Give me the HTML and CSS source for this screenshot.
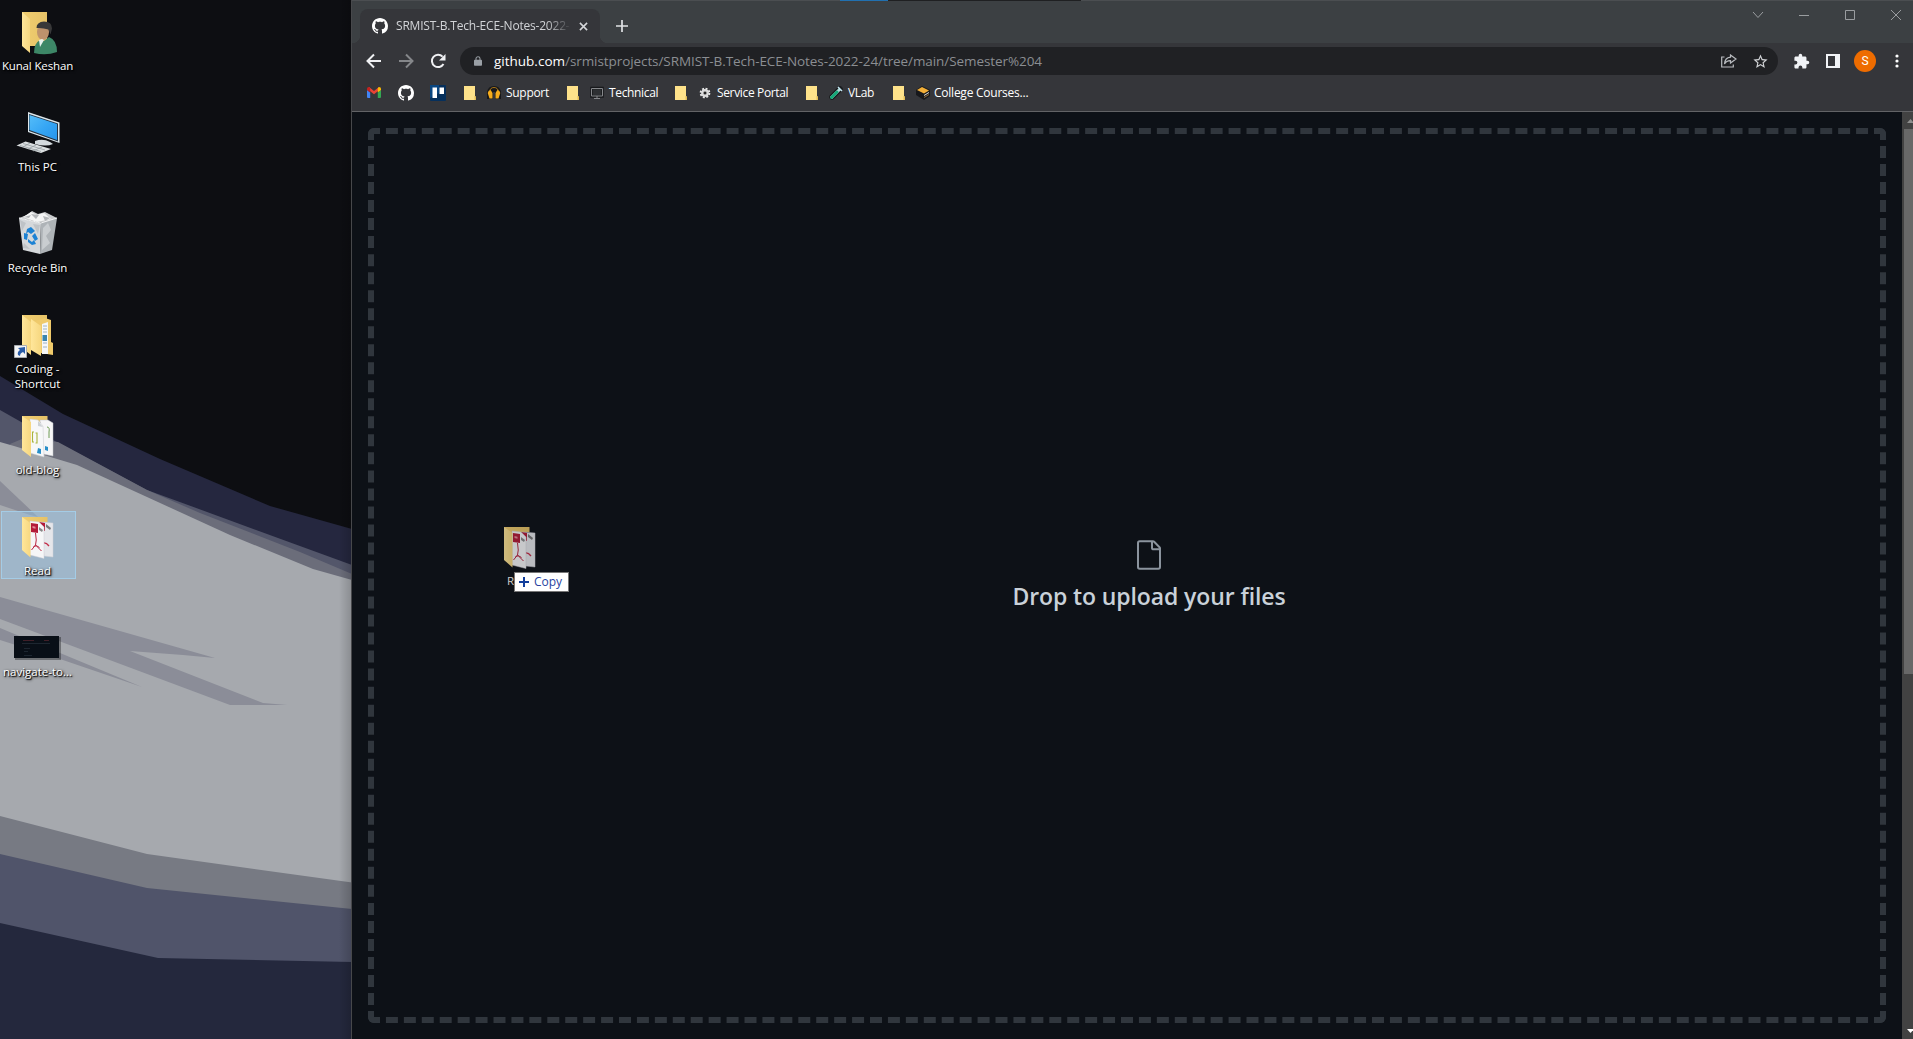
FILE: index.html
```html
<!DOCTYPE html>
<html lang="en">
<head>
<meta charset="utf-8">
<title>Desktop</title>
<link rel="stylesheet" href="styles.css">
</head>
<body>
<svg class="defs" aria-hidden="true">
  <defs>
    <linearGradient id="gold" x1="0" x2="1"><stop offset="0" stop-color="#ffe69a"/><stop offset="1" stop-color="#f6d780"/></linearGradient>
    <linearGradient id="back" x1="0" x2="1"><stop offset="0" stop-color="#f1ce70"/><stop offset="1" stop-color="#e6c267"/></linearGradient>
    <linearGradient id="screen" x1="0" x2="1" y2="1"><stop offset="0" stop-color="#55bdf9"/><stop offset=".55" stop-color="#35a5f4"/><stop offset="1" stop-color="#2795ec"/></linearGradient>
    <linearGradient id="shade" x1="0" x2="1"><stop offset="0" stop-color="#000" stop-opacity="0"/><stop offset="1" stop-color="#000" stop-opacity=".16"/></linearGradient>
  </defs>
  <symbol id="github" viewBox="0 0 16 16"><path d="M8 0C3.58 0 0 3.58 0 8c0 3.54 2.29 6.53 5.47 7.59.4.07.55-.17.55-.38 0-.19-.01-.82-.01-1.49-2.01.37-2.53-.49-2.69-.94-.09-.23-.48-.94-.82-1.13-.28-.15-.68-.52-.01-.53.63-.01 1.08.58 1.23.82.72 1.21 1.87.87 2.33.66.07-.52.28-.87.51-1.07-1.78-.2-3.64-.89-3.64-3.95 0-.87.31-1.59.82-2.15-.08-.2-.36-1.02.08-2.12 0 0 .67-.21 2.2.82.64-.18 1.32-.27 2-.27s1.36.09 2 .27c1.53-1.04 2.2-.82 2.2-.82.44 1.1.16 1.92.08 2.12.51.56.82 1.27.82 2.15 0 3.07-1.87 3.75-3.65 3.95.29.25.54.73.54 1.48 0 1.07-.01 1.93-.01 2.2 0 .21.15.46.55.38A8.01 8.01 0 0 0 16 8c0-4.42-3.58-8-8-8z"/></symbol>
  <symbol id="note" viewBox="0 0 12 14"><path fill="#fee28a" d="M0 0h11v10l1 1v3H0z"/><path fill="#e3bd55" d="M10.500 10h.7l.8 1v3h-1.500z"/></symbol>
  <symbol id="pdf-folder" viewBox="0 0 75 52">
    <path fill="url(#back)" d="M22 6h25.500v5H30v29l-8-1z"/>
    <path fill="#e5e6ea" stroke="#cfcfd4" stroke-width=".5" d="M40 11l13 1v34l-9-1z"/><path fill="#b31b38" d="M39 11l6 1v8l-5-2z"/><path fill="#777" d="M46 13l5 4-1 2-4-3z"/><path d="M43 32q3-1 6 3" fill="none" stroke="#c5304a" stroke-width="1.300"/>
    <path fill="#f6f6f7" stroke="#cfcfd4" stroke-width=".5" d="M30 10l9 1 5 5v31.500L30 44z"/><path fill="#b31b38" d="M31 12l7 1v9l-7-1z"/><path fill="#888" d="M39 16l4 3-1 2-3-2z"/><path fill="#e78998" d="M32.500 15l3 .7v2l-3-.7z"/>
    <path d="M35.500 22q1.500 8 0 12l-4 5m4-5 6 6m-8-4.500q3-2 6 1" fill="none" stroke="#bb2742" stroke-width="1"/>
    <path fill="url(#gold)" d="M22 6l8.500 6v34.500L22 39z"/>
  </symbol>
</svg>

<main class="desktop">
  <svg class="wallpaper" viewBox="0 0 352 1039" preserveAspectRatio="none" aria-hidden="true">
    <path fill="#0d0e12" d="M0 0h352v1039H0z"/>
    <path fill="#25273f" d="M0 376 63 414 160 459 270 506 352 529V700H0z"/>
    <path fill="#53566a" d="M0 410 53 440 147 490 352 565V700H0z"/>
    <path fill="#6b6d7a" d="M10 444 22 439 58 442 147 490 200 513 300 552 352 574V700H100z"/>
    <path fill="#a6a9ae" d="M0 442 14 446 77 465 147 497 230 535 313 569 352 580V900H0z"/>
    <path fill="#8b8d98" d="M0 481 38 517 30 515 0 505zM0 597 215 658 183 655 130 651 263 703 287 705H230L0 619zM0 628 60 653 142 687 60 659 0 640z"/>
    <path fill="#777a83" d="M0 816 147 854 352 882.500V1000H0z"/>
    <path fill="#50546a" d="M0 854 147 888 352 909V1039H0z"/>
    <path fill="#24283d" d="M0 923 158 958 352 962V1039H0z"/>
    <path fill="url(#shade)" d="M339 0h12v1039h-12z"/>
  </svg>

  <section class="icons">
    <div class="shortcut">
      <svg viewBox="0 0 75 52"><path fill="url(#back)" d="M22 6h25v34H22z"/><path fill="url(#gold)" d="M22 6l8 7v34l-8-7z"/><ellipse cx="43" cy="26" rx="6" ry="8" fill="#bd926c"/><path fill="#383839" d="M36.500 22q0-6 7.500-6.500 8 0 8 7l-1.500 6-2-5q-6-2-12-1.500z"/><path fill="#3d8767" d="M34 47q0-10 6-13l4 1 5-4q8 3 8 15-11 4-23 1z"/><path fill="#e9f2ef" d="m39 34 3-1 2 1-4 7z"/></svg>
      <span class="s-kunal">Kunal Keshan</span>
    </div>
    <div class="shortcut">
      <svg viewBox="0 0 75 52"><path fill="#d4dade" d="M35 34q8-3 15 1l3 2q-7 3-18 0z"/><path fill="#dde7ec" d="m28 5 31.500 10.500v20.500L28 25z"/><path fill="#26323f" d="m29 7 29 9.500v18L29 24z"/><path fill="url(#screen)" d="m29.500 8 27.500 9v16L29.500 23z"/><path fill="#dce0e2" d="m16.500 38.500 9-4L51 42l-10 4z"/><path fill="none" stroke="#8e969b" stroke-width=".7" d="m20 38.500 21 6m-18-8 22 6.500M23 40l7-4m-2 6 8-4m-3 6 9-4"/></svg>
      <span>This PC</span>
    </div>
    <div class="shortcut">
      <svg viewBox="0 0 75 52"><path fill="#c9cbcd" d="m19 10 8-3 5-4 6 3 7-2 12 6-14 5z"/><path fill="#f4f5f5" d="m23 9 8-5 6 3 7-2 7 6-14 3z"/><path fill="#b3b6b9" d="m31 6 5 5 3-4zM24 9l5 1 2-3zM43 8l2 5 5-3z"/><path fill="#d5d8db" d="m19 10 22 5-1 31-17-4z"/><path fill="#aeb3b7" d="m41 15 16-5-5 32-12 4z"/><path fill="#c9cdd0" d="m43 20 5-5 3 7-5 6 4 7-8 7z"/><path fill="#bfc3c7" d="m20 12 6 3-4 8zM33 16l7 1-2 9zM24 35l6 6-7-1z"/><path fill="none" stroke="#f2f3f4" d="m19 10 22 5 16-5"/><path fill="#1d82d4" d="m27 21 4-2 4 4-4 3-3-2-2 2zm8 4 3 6-3 2-3-5zm-11 0 4 1-1 6-3-1zm4 6 4 3 2-2 2 4-4 1-4-3z"/></svg>
      <span class="s-bin">Recycle Bin</span>
    </div>
    <div class="shortcut">
      <svg viewBox="0 0 75 52"><path fill="url(#back)" d="M22 6h25v34H22z"/><path fill="#efca6b" d="m35 12 10-3 6 2v22l2 1v12l-12-2z"/><path fill="#f5f7f8" d="m42 15 6-2v32h-6z"/><path fill="none" stroke="#9eb2c2" stroke-width="1" d="M43 17h4m-4 3h4m-4 3h4m-4 11h4m-4 4h4"/><path fill="#3984ad" d="M42.500 26h4.500v6h-4.500z"/><path fill="url(#gold)" d="m22 6 9 7v33l-9-7z"/><path fill="url(#gold)" d="m31 10 10 7v30l-10-6z"/><path fill="#f3f4f5" stroke="#a9adb2" d="M14.500 36.500h12v12h-12z"/><path fill="#285ba8" d="m18 39 7-1v7l-2-2q-3 1-3 4l-2-1q-1-3 2-5z"/></svg>
      <span>Coding -<br>Shortcut</span>
    </div>
    <div class="shortcut">
      <svg viewBox="0 0 75 52"><path fill="url(#back)" d="M22 6h25.500v6H22z"/><path fill="#f6f6f7" stroke="#bfc3c7" stroke-width=".5" d="M40 10h8l5 3v33l-10-2z"/><path fill="none" stroke="#6e9c55" d="M47 17q3 0 2 5v6"/><path fill="#298fc8" d="m45 36 3 1v4l-3-1z"/><path fill="#f7f8f9" stroke="#c8cbce" stroke-width=".5" d="m30 9 8 1 5 6 1 31-14-4z"/><path fill="#ccd1d4" d="m38 11 5 6-5-1z"/><path fill="none" stroke="#aab43c" stroke-width="1.100" d="M34 22h-1.500v10H34m1.500-9H37v10h-1.500"/><path fill="#298fc8" d="m38 38 3 1v5l-4-1z"/><path fill="url(#gold)" d="m22 6 9 6v35l-9-7z"/></svg>
      <span>old-blog</span>
    </div>
    <div class="shortcut selected">
      <svg viewBox="0 0 75 52"><use href="#pdf-folder"/></svg>
      <span>Read</span>
    </div>
    <div class="shortcut">
      <svg viewBox="0 0 75 52"><path fill="#0005" d="M15 25h46v23H15z"/><path fill="#090f17" d="M14 24h45v22H14z"/><path fill="none" stroke="#5a2730" stroke-opacity=".7" d="M23 28.500h11m10 0h5"/><path fill="none" stroke="#26313c" stroke-opacity=".7" d="M22 31.500h28M24 36.500h6m-6 3h4m-4 4h8"/></svg>
      <span>navigate-to...</span>
    </div>
  </section>

  <section class="window">
    <header class="tabstrip">
      <i class="edge-blue"></i><i class="edge-dark"></i>
      <div class="tab">
        <svg class="i16 white" viewBox="0 0 16 16"><use href="#github"/></svg>
        <span class="tab-title">SRMIST-B.Tech-ECE-Notes-2022-</span>
        <svg class="close" viewBox="0 0 10 10"><path d="m1 1 8 8m0-8-8 8"/></svg>
      </div>
      <svg class="plus" viewBox="0 0 12 12"><path d="M6 0v12M0 6h12"/></svg>
      <svg class="controls" viewBox="0 0 150 12"><path d="m1 3 5 5.500L11 3M47 6.500h10M93.500 1.500h9v9h-9zM139 1l10 10m0-10-10 10"/></svg>
    </header>
    <div class="toolbar">
      <svg class="nav" viewBox="0 0 80 16"><path stroke="#f0f1f3" d="M15 8H2m6-6.500L1.500 8 8 14.500"/><path stroke="#85878a" d="M33 8h13m-6-6.500L46.500 8 40 14.500"/><path stroke="#f0f1f3" d="M77.500 11a6.200 6.200 0 1 1-.9-7.400"/><path fill="#f0f1f3" d="M79.500 1v6.500H73z"/></svg>
      <div class="omnibox">
        <svg class="lock" viewBox="0 0 10 12"><path fill="#9aa0a6" d="M1 4.500h8q1 0 1 1V11q0 1-1 1H1q-1 0-1-1V5.500q0-1 1-1z"/><path fill="none" stroke="#9aa0a6" stroke-width="1.300" d="M2.500 5V3a2.500 2.300 0 0 1 5 0v2"/></svg>
        <div class="url"><b>github.com</b><span>/srmistprojects/SRMIST-B.Tech-ECE-Notes-2022-24/tree/main/Semester%204</span></div>
        <svg class="share" viewBox="0 0 16 14"><path d="M3.500 3H.7v10h11.600v-2.500"/><path d="M9.500 1 15 5 9.500 9V6.700Q5.500 6.500 3.500 10q.5-6.300 6-6.800z"/></svg>
        <svg class="star" viewBox="0 0 24 24"><path d="m22 9.240-7.190-.62L12 2 9.190 8.630 2 9.240l5.460 4.730L5.820 21 12 17.270 18.180 21l-1.630-7.030zM12 15.400l-3.760 2.270 1-4.280-3.320-2.880 4.380-.38L12 6.100l1.710 4.040 4.380.38-3.320 2.880 1 4.280z"/></svg>
      </div>
      <svg class="puzzle" viewBox="0 0 24 24"><path d="M20.500 11H19V7c0-1.100-.9-2-2-2h-4V3.500a2.500 2.500 0 0 0-5 0V5H4c-1.100 0-2 .9-2 2v3.800h1.500a2.700 2.700 0 0 1 0 5.400H2V20c0 1.100.9 2 2 2h3.800v-1.500a2.700 2.700 0 0 1 5.400 0V22H17c1.100 0 2-.9 2-2v-4h1.500a2.500 2.500 0 0 0 0-5z"/></svg>
      <svg class="panel" viewBox="0 0 14 14"><path d="M0 0h14v14H0zm2 2v10h7V2z" fill-rule="evenodd"/></svg>
      <span class="avatar">S</span>
      <svg class="dots" viewBox="0 0 4 14"><circle cx="2" cy="2" r="1.600"/><circle cx="2" cy="7" r="1.600"/><circle cx="2" cy="12" r="1.600"/></svg>
    </div>
    <nav class="bookmarks">
      <svg class="gmail" viewBox="0 0 14 11"><path fill="#4285f4" d="M0 3l3.200 2.500V11H1q-1 0-1-1z"/><path fill="#34a853" d="M14 3l-3.200 2.500V11H13q1 0 1-1z"/><path fill="#ea4335" d="M2 0l5 4 5-4 1 2.500-6 4.800-6-4.800z"/><path fill="#c5221f" d="M0 1.500Q0 0 2 0l1.200 1v4.500L0 3z"/><path fill="#fbbc04" d="M14 1.500Q14 0 12 0l-1.200 1v4.500L14 3z"/></svg>
      <svg class="i16 white" viewBox="0 0 16 16"><use href="#github"/></svg>
      <svg class="i16 trello" viewBox="0 0 16 16"><rect width="16" height="16" rx="1" fill="#06305c"/><path fill="#0a4680" d="M0 0h9v8L0 13z"/><path fill="#fff" d="M2.500 2.500H7V13H2.500zM9.500 2.500H14V9H9.500z"/></svg>
      <a class="bm"><svg class="note"><use href="#note"/></svg><svg class="bi" viewBox="0 0 14 14"><path fill="#17181b" d="M0 13V6q1-6 7-6t7 6v7H8V6H6v7z"/><path fill="none" stroke="#a87518" stroke-width="1" d="M2.500 6Q3 1.500 7 1.500T11.500 6"/><path fill="#f6ac1c" d="M.7 7q.3-2.500 3-3L5.500 7v5.500h-3zM13.300 7q-.3-2.500-3-3L8.500 7v5.500h3z"/></svg><span class="b-support">Support</span></a>
      <a class="bm"><svg class="note"><use href="#note"/></svg><svg class="bi" viewBox="0 0 14 14"><path fill="#2e3033" stroke="#17181b" stroke-width="2.500" d="M1.500 2h11v8.500h-11z"/><path fill="none" stroke="#85878a" d="M1.500 2.500h11v7.500h-11zM4 12.500h6M7 10v2"/></svg><span class="b-tech">Technical</span></a>
      <a class="bm"><svg class="note"><use href="#note"/></svg><svg class="bi gear" viewBox="0 0 14 14"><circle cx="7" cy="7" r="5" fill="none" stroke="#e8e8e8" stroke-width="2.500" stroke-dasharray="2.200 1.730"/><circle cx="7" cy="7" r="3.300" fill="#666" stroke="#dcdcdc" stroke-width="2.500"/><circle cx="7" cy="7" r="1.200" fill="#111"/></svg><span class="b-service">Service Portal</span></a>
      <a class="bm"><svg class="note"><use href="#note"/></svg><svg class="bi" viewBox="0 0 14 14"><path stroke="#191b1d" stroke-width="5.500" stroke-linecap="round" d="m3 11 8-8"/><path stroke="#aed8d7" stroke-width="3" d="m2 12 9-9"/><path stroke="#16a979" stroke-width="3" stroke-linecap="round" d="m2.500 11.500 5.500-5.500"/><path stroke="#c4e8f3" stroke-width="1.500" d="m9 1 4 4"/></svg><span class="b-vlab">VLab</span></a>
      <a class="bm"><svg class="note"><use href="#note"/></svg><svg class="bi" viewBox="0 0 14 14"><path fill="#17181b" d="m0 4 6-4 8 4v6l-6 4-8-5z"/><path fill="#f1ae38" d="m1 4 5-3 7 3.500-5 3z"/><path fill="#e1e1df" d="m8 9 5-3v1L8 10z"/><path fill="#8e6b3d" d="m8 11 5-3v1l-5 3z"/></svg><span class="b-college">College Courses...</span></a>
    </nav>
    <div class="page">
      <div class="dropzone">
        <svg class="file" viewBox="0 0 24 24"><path d="M3 3a2 2 0 0 1 2-2h9.982a2 2 0 0 1 1.414.586l4.018 4.018A2 2 0 0 1 21 7.018V21a2 2 0 0 1-2 2H5a2 2 0 0 1-2-2V3zm2-.5a.5.5 0 0 0-.5.5v18a.5.5 0 0 0 .5.5h14a.5.5 0 0 0 .5-.5V8.500h-4a2 2 0 0 1-2-2v-4H5zm10 0v4a.5.5 0 0 0 .5.5h4a.5.5 0 0 0-.146-.336l-4.018-4.018A.5.5 0 0 0 15 2.500z"/></svg>
        <h1>Drop to upload your files</h1>
      </div>
      <div class="scrollbar">
        <svg viewBox="0 0 11 17"><path fill="#8e8e8e" d="m5 11 3.500-4 3.500 4z"/></svg>
        <i class="thumb"></i>
        <svg viewBox="0 0 11 17"><path fill="#fff" d="M5 7h7l-3.500 4z"/></svg>
      </div>
    </div>
  </section>

  <div class="drag">
    <svg viewBox="0 0 75 52"><use href="#pdf-folder"/></svg>
    <span class="drag-label">Read</span>
    <div class="copy"><svg viewBox="0 0 10 10"><path d="M5 0v10M0 5h10"/></svg><span>Copy</span></div>
  </div>
</main>
</body>
</html>
```
FILE: styles.css
```css
* { box-sizing: border-box; }
body { margin: 0; overflow: hidden; font-family: "Open Sans", "Noto Sans", sans-serif; font-size: 12px; background: #0d0e12; }
svg { display: block; flex: none; }
.defs { position: absolute; width: 0; height: 0; }
.desktop { position: relative; display: flex; width: 1913px; height: 1039px; }
.wallpaper { position: absolute; left: 0; top: 0; width: 352px; height: 1039px; }

.icons { position: relative; width: 351px; padding: 6px 0 0 1px; flex: none; }
.shortcut { width: 75px; height: 68px; margin-bottom: 33px; border: 1px solid transparent; }
.shortcut svg { width: 75px; height: 52px; margin: -1px 0 0 -2px; }
.shortcut span { display: block; margin-left: -2px; width: 75px; text-align: center; white-space: nowrap; line-height: 15px; font-size: 11.500px; color: #fff; text-shadow: 1px 1px 1px #000, 1px 1px 3px #000; }
.selected { background: #98c4e480; border-color: #a4cce6; }
.shortcut .s-kunal { letter-spacing: -.14px; }
.shortcut .s-bin { letter-spacing: -.05px; }

.window { flex: 1; min-width: 0; display: flex; flex-direction: column; border-left: 1px solid #47484b; position: relative; background: #35363a; }
.tabstrip { position: relative; height: 43px; flex: none; display: flex; background: #3c4043; border-top: 1px solid #4b4e51; padding: 8px 11px 0 8px; }
.edge-blue, .edge-dark { position: absolute; top: -1px; height: 1px; }
.edge-blue { left: 488px; width: 48px; background: #2170b0; }
.edge-dark { left: 536px; width: 193px; background: #1f2022; }
.tab { position: relative; width: 240px; height: 34px; display: flex; align-items: center; background: #35363a; border-radius: 8px 8px 0 0; padding: 0 12px; }
.tab::before, .tab::after { content: ""; position: absolute; bottom: 0; width: 8px; height: 8px; }
.tab::before { left: -8px; background: radial-gradient(circle at 0 0, transparent 8px, #35363a 8.500px); }
.tab::after { right: -8px; background: radial-gradient(circle at 100% 0, transparent 8px, #35363a 8.500px); }
.i16 { width: 16px; height: 16px; }
.white { fill: #fff; }
.tab-title { width: 176px; margin-left: 8px; overflow: hidden; white-space: nowrap; font-size: 12px; letter-spacing: -.2px; line-height: 16px; margin-bottom: 1px; color: #d2d4d7; -webkit-mask-image: linear-gradient(90deg, #000 86%, transparent); mask-image: linear-gradient(90deg, #000 86%, transparent); }
.close { width: 9px; height: 9px; margin-left: 8px; fill: none; stroke: #d5d7da; stroke-width: 1.700; }
.plus { width: 12px; height: 12px; margin: 11px 0 0 16px; fill: none; stroke: #e0e2e5; stroke-width: 1.700; }
.controls { width: 150px; height: 12px; margin: 0 0 0 auto; fill: none; stroke: #9a9da0; stroke-width: 1; }

.toolbar { height: 36px; flex: none; display: flex; align-items: center; padding: 0 14px; }
.nav { width: 80px; height: 16px; fill: none; stroke-width: 2; }
.omnibox { width: 1319px; height: 28px; margin-left: 14px; border-radius: 14px; background: #202124; display: flex; align-items: center; padding: 0 9px 0 14px; }
.lock { width: 8px; height: 12px; }
.url { margin-left: 12px; font-size: 13.500px; line-height: 20px; white-space: nowrap; flex: 1; color: #8b8e92; }
.url b { color: #fff; font-weight: 400; }
.url span { letter-spacing: -.08px; }
.share { width: 16px; height: 14px; fill: none; stroke: #b9bcc0; stroke-width: 1.200; }
.star { width: 17px; height: 17px; margin-left: 15px; fill: #d1d3d6; }
.puzzle { width: 17px; height: 17px; margin-left: 14.500px; fill: #f1f3f6; }
.panel { width: 14px; height: 14px; margin-left: 16.500px; fill: #f1f3f6; }
.avatar { width: 22px; height: 22px; margin-left: 14px; border-radius: 50%; background: #ee6c00; color: #fff; display: flex; align-items: center; justify-content: center; font: 12px Roboto, sans-serif; }
.dots { width: 4px; height: 14px; margin-left: 19px; fill: #fff; }

.bookmarks { height: 33px; flex: none; display: flex; align-items: center; padding: 0 0 5px 15px; border-bottom: 1px solid #626366; }
.gmail { width: 14px; height: 11px; margin-right: 17px; }
.trello { margin: 0 18px 0 16px; }
.bm { display: flex; align-items: center; margin-right: 18px; color: #fff; }
.note { width: 12px; height: 14px; }
.bi { width: 14px; height: 14px; margin: 0 5px 0 11px; }
.gear { padding: 1px; }
.bm span { font-size: 12px; letter-spacing: -.35px; line-height: 16px; white-space: nowrap; }
.b-support { width: 43px; }
.b-tech { width: 48px; }
.b-service { width: 71px; }
.b-vlab { width: 27px; }
.b-college { width: 94px; }
.bm .b-support { letter-spacing: -.3px; }
.bm .b-college { letter-spacing: -.24px; margin-left: -1px; }

.page { flex: 1; min-height: 0; display: flex; background: #0d1117; }
.dropzone { flex: 1; margin: 16px; border: 6px dashed #30363d; border-radius: 6px; display: flex; flex-direction: column; align-items: center; padding: 405px 0 0 44px; }
.file { width: 32px; height: 32px; fill: #8b949e; }
.dropzone h1 { margin: 7px 0 0; font-size: 23px; letter-spacing: -.11px; line-height: 36px; font-weight: 600; color: #c9d1d9; white-space: nowrap; }
.scrollbar { width: 11px; background: #424242; }
.scrollbar svg { width: 11px; height: 17px; }
.thumb { display: block; margin: 0 0 348px 2px; height: 545px; background: #686868; }

.drag { position: absolute; left: 482px; top: 521px; width: 100px; }
.drag > svg { width: 75px; height: 52px; opacity: .8; }
.drag-label { position: absolute; left: 25px; top: 52px; font-size: 11.500px; line-height: 15px; color: #ccc; }
.copy { position: absolute; left: 32px; top: 51px; width: 55px; height: 20px; background: #fff; border: 1px solid #777; display: flex; align-items: center; padding-left: 4px; gap: 5px; color: #2843a0; font-size: 12px; }
.copy svg { width: 10px; height: 10px; stroke: #123e9c; stroke-width: 2; }
.copy span { line-height: 16px; }
```
